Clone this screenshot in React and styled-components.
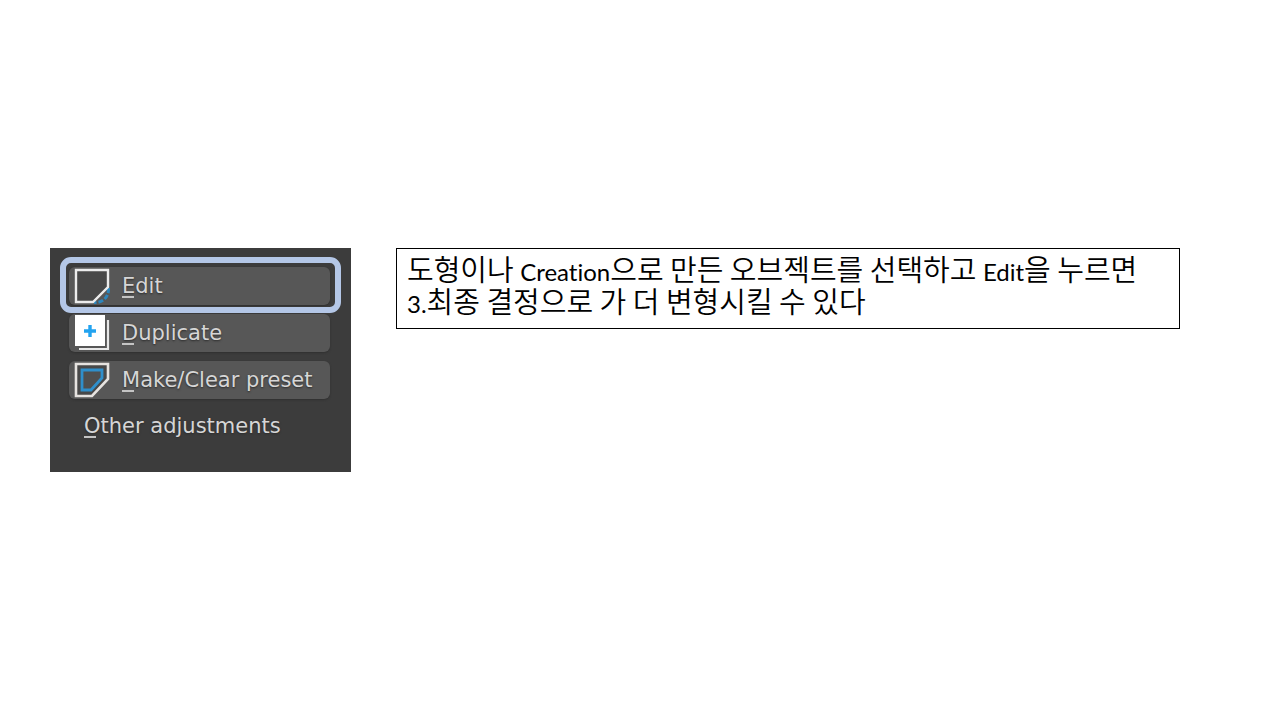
import styled, { createGlobalStyle } from "styled-components";

const toolList = [
  { name: "edit", label: "Edit", icon: <EditIcon />, isActive: true },
  { name: "duplicate", label: "Duplicate", icon: <DuplicateIcon /> },
  { name: "preset", label: "Make/Clear preset", icon: <PresetIcon /> },
];

function EditIcon() {
  return (
    <STIcon viewBox="0 0 36 36" aria-hidden="true">
      <path
        d="M34.5 20C35 29 29 35 20 34.5"
        fill="none"
        stroke="#2c86bd"
        strokeWidth="3"
        strokeDasharray="5 2"
      />
      <path
        d="M2 2H34V19L19 34H2Z"
        fill="#484848"
        stroke="#ececec"
        strokeWidth="2.4"
      />
    </STIcon>
  );
}

function DuplicateIcon() {
  return (
    <STIcon viewBox="0 0 36 36" aria-hidden="true">
      <path d="M34 5V34H5" fill="none" stroke="#e8e8e8" strokeWidth="2.2" />
      <rect x="1" y="0" width="30" height="31" fill="#ffffff" />
      <path d="M16 10V22M10 16H22" stroke="#22a3f0" strokeWidth="3.4" />
    </STIcon>
  );
}

function PresetIcon() {
  return (
    <STIcon viewBox="0 0 36 36" aria-hidden="true">
      <path
        d="M2 2H34V17L18 34H2Z"
        fill="#484848"
        stroke="#e6e3e0"
        strokeWidth="2.6"
      />
      <path
        d="M8 8H28V16L17 28H8Z"
        fill="#4f4f4f"
        stroke="#2f8fcb"
        strokeWidth="2.8"
      />
    </STIcon>
  );
}

function Label({ text }) {
  return (
    <span>
      <STShortcut>{text[0]}</STShortcut>
      {text.slice(1)}
    </span>
  );
}

function App() {
  return (
    <STPage>
      <GlobalStyle />
      <STPanel>
        {toolList.map((tool) => (
          <STToolButton key={tool.name} type="button" $active={tool.isActive}>
            {tool.icon}
            <Label text={tool.label} />
          </STToolButton>
        ))}
        <STPanelText>
          <Label text="Other adjustments" />
        </STPanelText>
      </STPanel>
      <STNote>
        도형이나 <STLatin>Creation</STLatin>으로 만든 오브젝트를 선택하고{" "}
        <STLatin>Edit</STLatin>을 누르면
        <br />
        <STLatin>3.</STLatin>최종 결정으로 가 더 변형시킬 수 있다
      </STNote>
    </STPage>
  );
}

const GlobalStyle = createGlobalStyle`
  * {
    box-sizing: border-box;
  }

  body {
    margin: 0;
    background-color: #ffffff;
  }
`;

const STPage = styled.main`
  display: grid;
  grid-template-columns: 301px 1fr;
  column-gap: 45px;
  align-content: center;
  align-items: start;
  min-height: 100vh;
  padding: 0 100px 0 50px;
`;

const STPanel = styled.section`
  display: flex;
  flex-direction: column;
  gap: 9px;
  padding: 19px 21px 28px 19px;
  background-color: #3c3c3c;
  color: #d6d6d6;
  font-family: "DejaVu Sans", sans-serif;
  font-size: 21px;
  line-height: 36px;
  text-shadow: 0 1px 2px #2c2c2c;
`;

const STToolButton = styled.button`
  position: relative;
  display: flex;
  align-items: center;
  gap: 12px;
  height: 38px;
  padding: 0 5px;
  border: none;
  border-radius: 6px;
  background-color: #575757;
  box-shadow: 0 1px 2px #303030;
  color: inherit;
  font: inherit;
  text-align: left;
  text-shadow: inherit;
  white-space: nowrap;

  &::after {
    content: "";
    display: ${({ $active }) => ($active ? "block" : "none")};
    position: absolute;
    inset: -10px -11px -8px -9px;
    border: 6px solid #b4c7e7;
    border-radius: 11px;
    z-index: 1;
  }
`;

const STIcon = styled.svg`
  flex: none;
  width: 36px;
  height: 36px;
`;

const STShortcut = styled.span`
  background: linear-gradient(#c4c4c4, #c4c4c4) 0 100% / 12px 2px no-repeat;
`;

const STPanelText = styled.p`
  margin: 0;
  padding-left: 15px;
`;

const STNote = styled.p`
  margin: 0;
  padding: 3px 10px 12px;
  border: 1px solid #000000;
  color: #000000;
  font-family: "Noto Sans CJK KR", sans-serif;
  font-size: 29px;
  font-weight: 350;
  line-height: 32px;
`;

const STLatin = styled.span`
  font-family: Lato, sans-serif;
  font-size: 24px;
  font-weight: 400;
  font-variant-ligatures: none;
  line-height: 24px;
`;

export default App;
